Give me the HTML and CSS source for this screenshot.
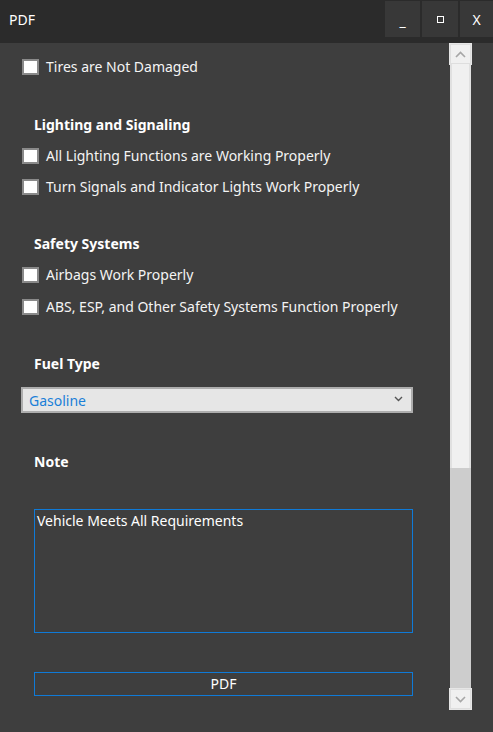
FILE: index.html
```html
<!DOCTYPE html>
<html>
<head>
<meta charset="utf-8">
<link rel="stylesheet" href="styles.css">
</head>
<body>
<div class="window">
  <header class="titlebar">
    <span class="title">PDF</span>
    <div class="winbtns">
      <div class="winbtn min">_</div>
      <div class="winbtn max"><span class="sq"></span></div>
      <div class="winbtn close">X</div>
    </div>
  </header>
  <div class="main">
    <div class="content">
      <label class="row first"><span class="cb"></span><span>Tires are Not Damaged</span></label>
      <div class="heading h1">Lighting and Signaling</div>
      <label class="row g11"><span class="cb"></span><span>All Lighting Functions are Working Properly</span></label>
      <label class="row g11"><span class="cb"></span><span>Turn Signals and Indicator Lights Work Properly</span></label>
      <div class="heading h2">Safety Systems</div>
      <label class="row g11"><span class="cb"></span><span>Airbags Work Properly</span></label>
      <label class="row g12"><span class="cb"></span><span>ABS, ESP, and Other Safety Systems Function Properly</span></label>
      <div class="heading h2">Fuel Type</div>
      <div class="select"><span>Gasoline</span>
        <svg class="chev" width="9" height="6" viewBox="0 0 9 6"><path d="M1 1 L4.5 4.5 L8 1" fill="none" stroke="#555" stroke-width="1.4"/></svg>
      </div>
      <div class="heading h3">Note</div>
      <div class="textarea">Vehicle Meets All Requirements</div>
      <div class="pdfbtn">PDF</div>
    </div>
    <div class="scrollbar">
      <div class="sbtn"><svg width="11" height="7" viewBox="0 0 11 7"><path d="M1 6 L5.5 1.5 L10 6" fill="none" stroke="#a6a6a6" stroke-width="1.6"/></svg></div>
      <div class="thumb"></div>
      <div class="track"></div>
      <div class="sbtn"><svg width="11" height="7" viewBox="0 0 11 7"><path d="M1 1 L5.5 5.5 L10 1" fill="none" stroke="#a6a6a6" stroke-width="1.6"/></svg></div>
    </div>
  </div>
</div>
</body>
</html>
```

FILE: styles.css
```css
* { box-sizing: border-box; }
html, body { margin: 0; padding: 0; }
body {
  width: 493px;
  height: 732px;
  background: #3e3e3e;
  font-family: "Noto Sans", "Open Sans", sans-serif;
  font-size: 14px;
  color: #ffffff;
  overflow: hidden;
}
.window { display: flex; flex-direction: column; height: 732px; }
.titlebar {
  height: 43px;
  background: #2b2b2b;
  display: flex;
  align-items: flex-start;
  justify-content: space-between;
  flex-shrink: 0;
}
.title { padding-left: 9px; line-height: 20px; margin-top: 10px; font-size: 14px; }
.winbtns { display: flex; gap: 2px; margin-top: 1px; }
.winbtn {
  height: 36px;
  background: #383838;
  display: flex;
  align-items: center;
  justify-content: center;
  color: #fff;
  font-size: 14px;
}
.winbtn.min { width: 35px; align-items: flex-end; padding-bottom: 9px; line-height: 14px; }
.winbtn.max { width: 36px; }
.winbtn.close { width: 33px; margin-left: 0; }
.sq { width: 7px; height: 7px; border: 1px solid #fff; display: block; margin-top: 1px; }
.main { flex: 1; display: flex; min-height: 0; }
.content {
  width: 450px;
  padding: 14px 0 0 22px;
  display: flex;
  flex-direction: column;
  align-items: flex-start;
}
.row {
  display: flex;
  align-items: center;
  height: 20px;
  line-height: 20px;
  gap: 7px;
  color: #f4f4f4;
}
.row.g11 { margin-top: 11px; }
.row.g12 { margin-top: 12px; }
.cb {
  width: 17px;
  height: 16px;
  background: #fff;
  border: 2px solid #8a8a8a;
  flex-shrink: 0;
}
.heading {
  font-weight: bold;
  height: 20px;
  line-height: 20px;
  margin-left: 12px;
  font-size: 14px;
}
.heading.h1 { margin-top: 38px; }
.heading.h2 { margin-top: 37px; }
.heading.h3 { margin-top: 39px; }
.select {
  margin-top: 13px;
  margin-left: -1px;
  width: 392px;
  height: 26px;
  border: 2px solid #adadad;
  background: #e6e6e6;
  display: flex;
  align-items: center;
  justify-content: space-between;
  padding: 0 8px 0 6px;
  color: #1a7fd8;
  font-size: 14px;
}
.chev { margin-top: -2px; }
.textarea {
  margin-top: 37px;
  margin-left: 12px;
  width: 379px;
  height: 124px;
  border: 1px solid #0f7ad7;
  padding: 2px 2px;
  line-height: 18px;
  color: #fff;
}
.pdfbtn {
  margin-top: 39px;
  margin-left: 12px;
  width: 379px;
  height: 24px;
  border: 1px solid #0f7ad7;
  text-align: center;
  line-height: 22px;
}
.scrollbar {
  width: 21px;
  height: 665px;
  margin-top: 1px;
  display: flex;
  flex-direction: column;
  background: #cdcdcd;
}
.sbtn {
  height: 20px;
  background: #f0f0f0;
  border: 1px solid #dedede;
  outline: 1px solid #e6e6e6;
  display: flex;
  align-items: center;
  justify-content: center;
}
.thumb { height: 404px; background: #f0f0f0; border-left: 2px solid #e0e0e0; border-right: 2px solid #e0e0e0; }
.track { flex: 1; background: #cdcdcd; }
```
